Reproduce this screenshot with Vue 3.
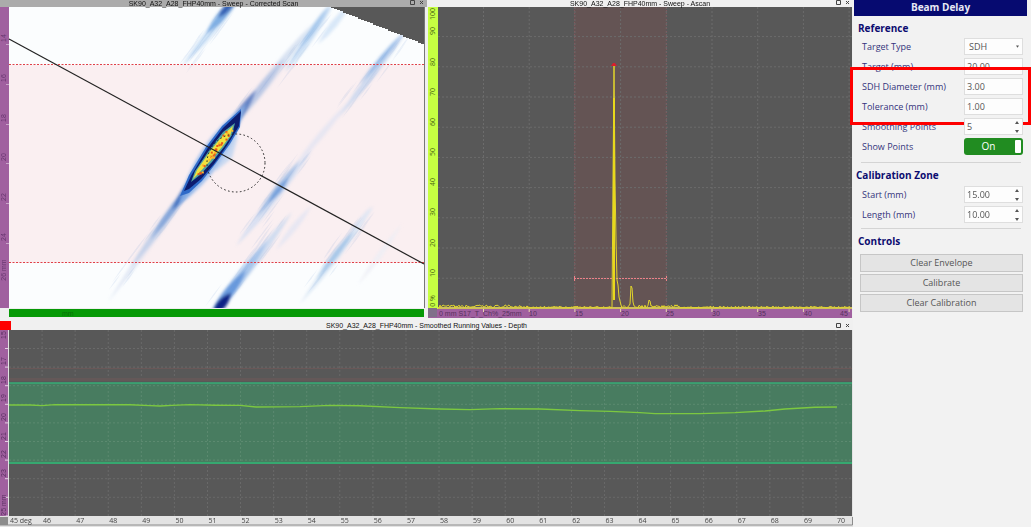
<script setup>
import { ref } from 'vue'

const targetType = ref('SDH')
const target = ref('20.00')
const diameter = ref('3.00')
const tolerance = ref('1.00')
const smoothing = ref('5')
const showPoints = ref(true)
const start = ref('15.00')
const length = ref('10.00')

const range = (n) => Array.from({ length: n }, (_, i) => i)

// Small seeded generator so that the traces look the same on every load.
function seeded(seed) {
  let s = seed
  return () => {
    s = (s * 16807) % 2147483647
    return s / 2147483647
  }
}

// Pointed streak between two points, widest in the middle.
function lens(x1, y1, x2, y2, w) {
  const dx = x2 - x1
  const dy = y2 - y1
  const l = Math.hypot(dx, dy)
  const nx = (-dy / l) * w
  const ny = (dx / l) * w
  const mx = (x1 + x2) / 2
  const my = (y1 + y2) / 2
  return `M${x1} ${y1}Q${mx + nx} ${my + ny} ${x2} ${y2}Q${mx - nx} ${my - ny} ${x1} ${y1}Z`
}

const echoes = [
  [108, 302, 205, 165, 7, '#c9d6ee', 0.5],
  [130, 268, 200, 172, 8, '#9bb8e2', 0.4],
  [150, 240, 200, 172, 7, '#5c8bd0', 0.6],
  [172, 210, 205, 165, 8, '#1c52b0', 0.7],
  [222, 140, 312, 24, 9, '#b8c9e8', 0.5],
  [228, 130, 285, 58, 8, '#8ba8da', 0.4],
  [226, 134, 256, 90, 8, '#2b57b0', 0.6],
  [285, 72, 334, 2, 8, '#b0cff0', 0.65],
  [300, 48, 330, 4, 5, '#7fb0e4', 0.5],
  [318, 44, 350, 4, 7, '#cfe2f6', 0.8],
  [182, 66, 244, -8, 8, '#c2dbf4', 0.8],
  [206, 34, 240, -6, 9, '#5c98dc', 0.7],
  [218, 18, 238, -4, 7, '#123fa0', 0.7],
  [338, 118, 410, 26, 7, '#c4d5ee', 0.8],
  [360, 84, 404, 32, 5, '#88b2e4', 0.75],
  [290, 172, 352, 98, 6, '#dfe2f2', 0.7],
  [236, 246, 312, 150, 8, '#d0dcf1', 0.8],
  [256, 218, 300, 160, 7, '#94b6e2', 0.75],
  [268, 203, 289, 178, 6, '#5c90d6', 0.6],
  [205, 325, 292, 212, 9, '#c6d7ef', 0.8],
  [205, 325, 268, 240, 10, '#96bbe8', 0.7],
  [208, 320, 246, 270, 10, '#4f88d6', 0.7],
  [212, 316, 231, 293, 9, '#0b2386', 1],
  [276, 250, 312, 205, 6, '#e2e5f3', 0.8],
  [300, 304, 374, 206, 7, '#d3e3f4', 0.8],
  [316, 280, 356, 228, 6, '#92bbe4', 0.7],
  [350, 235, 372, 206, 5, '#dde5f2', 0.8],
  [358, 285, 402, 224, 5, '#ecedf5', 0.8],
]

const rnd = seeded(77)
const speckles = []
const tracks = [
  [120, 285, 185, 195],
  [240, 115, 325, 20],
  [190, 60, 230, 10],
  [240, 245, 305, 155],
  [215, 306, 295, 205],
  [310, 290, 365, 215],
  [345, 108, 400, 40],
]
for (const [x1, y1, x2, y2] of tracks) {
  for (let i = 0; i < 16; i++) {
    const t = rnd()
    const o = (rnd() - 0.5) * 14
    const x = x1 + (x2 - x1) * t + o
    const y = y1 + (y2 - y1) * t + o * 0.6
    const l = 5 + rnd() * 7
    speckles.push(lens(x - l, y + l * 1.35, x + l, y - l * 1.35, 1.4))
  }
}

const hot = range(34).map(() => {
  const t = rnd()
  return {
    x: 197 + 32 * t + (rnd() - 0.5) * 5,
    y: 174 - 44 * t + (rnd() - 0.5) * 5,
    c: rnd() > 0.45 ? '#e8591c' : '#ffb52a',
  }
})

// Staircase edge of the scanned sector.
let sector = 'M328 7'
for (let i = 0; i < 32; i++) {
  sector += `h3v${i % 5 === 4 ? 2 : 1}`
}
sector += 'H424V7Z'

const scanLabels = [['14', 38], ['16', 78], ['18', 118], ['20', 157], ['22', 197], ['24', 237], ['26 mm', 270]]
const ampLabels = [
  ['100', 14], ['90', 31], ['80', 62], ['70', 92], ['60', 122], ['50', 152],
  ['40', 182], ['30', 212], ['20', 243], ['10', 273], ['0 %', 301],
]
const timeLabels = [['10', 533], ['15', 579], ['20', 625], ['25', 670], ['30', 716], ['35', 762], ['40', 808], ['45', 844]]
const depthLabels = [
  ['15', 335], ['17', 361], ['18', 380], ['19', 398], ['20', 417], ['21', 436], ['22', 454], ['23', 473], ['25 mm', 505],
]

const timeX = (i) => 483.5 + 45.7 * i
const ampY = (i) => 36.6 + 30.2 * i
const degX = (i) => 9 + 33.08 * i
const depthY = (i) => 348.5 + 18.6 * i

const noise = seeded(4242)
let trace = 'M438 307'
for (let x = 439; x < 851; x++) {
  if (x === 612) {
    trace += 'L612 307L613 180L614 66L615 180L616 240L617 280L618 285L619 297L621 305'
    x = 621
  } else if (x === 630) {
    trace += 'L630 304L631 286L632 288L633 302'
    x = 633
  } else if (x === 649) {
    trace += 'L649 300L650 301L651 306'
    x = 651
  } else {
    const amp = x < 530 ? 3 : x < 612 ? 1.6 : x < 680 ? 3.2 : 1.6
    trace += `L${x} ${(308 - noise() * amp).toFixed(1)}`
  }
}

const depthTrace =
  'M9 405L30 405L42 405.6L55 404.6L130 404.8L150 405.6L160 406L172 405.4L190 404.6L215 405.2L240 405.4L256 407L300 406.6L330 405.4L360 405.8L400 407.6L440 409L470 409.6L500 408.6L540 409L580 410.6L610 411.4L640 412.6L655 413.6L700 413.6L735 412.6L765 411L785 409L815 407.2L837 407'
</script>

<template>
  <div class="app">
    <main class="views">
      <div class="top">
        <section class="pane">
          <header class="bar slim active">
            <h2>SK90_A32_A28_FHP40mm - Sweep - Corrected Scan</h2>
            <span class="tools">
              <button aria-label="Maximise scan"><svg viewBox="0 0 5 5"><path d="M.5.5h4v4h-4z" /></svg></button>
              <button aria-label="Close scan"><svg viewBox="0 0 5 5"><path d="M1 1l3 3M4 1l-3 3" /></svg></button>
            </span>
          </header>
          <svg class="plot" viewBox="0 7 427 311">
            <defs>
              <filter id="soft" x="-20%" y="-20%" width="140%" height="140%"><feGaussianBlur stdDeviation="1.8" /></filter>
              <filter id="fine" x="-20%" y="-20%" width="140%" height="140%"><feGaussianBlur stdDeviation=".7" /></filter>
              <clipPath id="area"><rect x="9" y="7" width="415" height="301" /></clipPath>
            </defs>
            <rect x="0" y="7" width="427" height="311" fill="#efefef" />
            <rect x="0" y="7" width="9" height="301" fill="#a0609f" />
            <rect x="9" y="7" width="415" height="301" fill="#fbfdfe" />
            <rect x="9" y="65" width="415" height="198" fill="#faeff1" />
            <g clip-path="url(#area)">
              <g filter="url(#soft)">
                <path v-for="(e, i) in echoes" :key="i" :d="lens(e[0], e[1], e[2], e[3], e[4])" :fill="e[5]" :opacity="e[6]" />
              </g>
              <g filter="url(#fine)" fill="#7098d4" opacity=".12">
                <path v-for="(d, i) in speckles" :key="i" :d="d" />
              </g>
              <g filter="url(#soft)">
                <path :d="lens(178, 206, 246, 104, 22)" fill="#8bb4ea" opacity=".8" />
                <path d="M215 172L232 158L238 136L228 132Z" fill="#a9c9f0" opacity=".6" />
              </g>
              <g filter="url(#fine)">
                <path d="M180 196L189 175L206 147L222 126L241 109L240 127L230 144L216 163L202 181L189 193Z" fill="#2f6bc8" />
                <path d="M184 191L191 176L207 149L223 128L241 111L239 126L228 144L214 164L201 179L189 189Z" fill="#081a6e" />
                <path d="M191 182L195 171L210 149L223 132L235 123L232 135L224 147L212 162L200 175Z" fill="#54a3a0" />
                <path d="M193 179L197 170L211 150L224 134L233 126L230 136L222 147L210 161L199 173Z" fill="#f2e23c" />
              </g>
              <rect v-for="(h, i) in hot" :key="i" :x="h.x" :y="h.y" width="2" height="2" :fill="h.c" />
            </g>
            <path :d="sector" fill="#585858" />
            <g stroke="#e04048" stroke-dasharray="2 1.5">
              <path d="M9 64.5H424M9 262.5H424" />
            </g>
            <path d="M9 39L424 264" stroke="#222" stroke-width="1.2" />
            <circle cx="236" cy="163" r="29" fill="none" stroke="#222" stroke-dasharray="1.6 2.4" />
            <path d="M424.5 7V308" stroke="#777" />
            <rect x="9" y="309" width="415" height="8" fill="#069906" />
            <text class="tiny" x="62" y="316" fill="#067006">mm</text>
            <g v-for="l in scanLabels" :key="l[0]" class="tiny" fill="#683670">
              <text :transform="`translate(6 ${l[1]}) rotate(-90)`" text-anchor="middle">{{ l[0] }}</text>
              <path v-if="l[1] < 260" :d="`M6 ${l[1] + 6}.5h3`" stroke="#c9a5c9" />
            </g>
          </svg>
        </section>

        <section class="pane">
          <header class="bar slim">
            <h2>SK90_A32_A28_FHP40mm - Sweep - Ascan</h2>
            <span class="tools">
              <button aria-label="Maximise Ascan"><svg viewBox="0 0 5 5"><path d="M.5.5h4v4h-4z" /></svg></button>
              <button aria-label="Close Ascan"><svg viewBox="0 0 5 5"><path d="M1 1l3 3M4 1l-3 3" /></svg></button>
            </span>
          </header>
          <svg class="plot" viewBox="427 7 426 311">
            <rect x="427" y="7" width="426" height="311" fill="#efefef" />
            <rect x="428" y="7" width="10" height="302" fill="#c6ff42" />
            <rect x="438" y="7" width="414" height="302" fill="#585858" />
            <rect x="574" y="7" width="92" height="302" fill="#645454" />
            <g stroke="#6c6c6c" stroke-dasharray="2 2">
              <path v-for="i in range(9)" :key="'v' + i" :d="`M${timeX(i)} 7V309`" />
              <path v-for="i in range(9)" :key="'h' + i" :d="`M438 ${ampY(i)}H852`" />
            </g>
            <path d="M574.5 7V309M666.5 7V309" stroke="#80585e" stroke-dasharray="1 2" />
            <path d="M574 278.500H667M574.5 276v6M666.500 276v6" stroke="#ee8088" stroke-dasharray="2 1" />
            <rect x="428" y="309" width="424" height="9" fill="#a0609f" />
            <path d="M438 308H852" stroke="#f4e35c" stroke-width="1.500" />
            <path :d="trace" fill="none" stroke="#e3d62b" />
            <path d="M614 98V300" stroke="#e8d81c" stroke-width="2" />
            <path d="M611 66l2-3h2l2 3z" fill="#d81f2d" />
            <rect x="428" y="308" width="9" height="9" fill="#81708a" />
            <g class="tiny" fill="#56305e">
              <text x="439" y="316">0 mm S17_T_Ch%_25mm</text>
              <text v-for="l in timeLabels" :key="l[0]" :x="l[1]" y="316" text-anchor="middle">{{ l[0] }}</text>
            </g>
            <path v-for="i in range(9)" :key="i" :d="`M${timeX(i)} 309v3`" stroke="#e8d7b0" />
            <text
              v-for="l in ampLabels"
              :key="l[0]"
              class="tick"
              fill="#4f6e16"
              text-anchor="middle"
              :transform="`translate(435 ${l[1]}) rotate(-90)`"
            >{{ l[0] }}</text>
          </svg>
        </section>
      </div>

      <section class="pane">
        <header class="bar">
          <i class="flag"></i>
          <h2>SK90_A32_A28_FHP40mm - Smoothed Running Values - Depth</h2>
          <span class="tools">
            <button aria-label="Maximise depth"><svg viewBox="0 0 5 5"><path d="M.5.5h4v4h-4z" /></svg></button>
            <button aria-label="Close depth"><svg viewBox="0 0 5 5"><path d="M1 1l3 3M4 1l-3 3" /></svg></button>
          </span>
        </header>
        <svg class="plot" viewBox="0 330 853 197">
          <rect x="0" y="330" width="853" height="197" fill="#e3e3e3" />
          <rect x="0" y="330" width="8" height="186" fill="#a0609f" />
          <rect x="9" y="330" width="843" height="186" fill="#585858" />
          <g stroke="#6a6a6a" stroke-dasharray="2 2">
            <path v-for="i in range(25)" :key="'v' + i" :d="`M${degX(i + 1)} 330V516`" />
            <path v-for="i in range(9)" :key="'h' + i" :d="`M9 ${depthY(i)}H852`" />
          </g>
          <path d="M9 368.500H852" stroke="#6a5858" />
          <path d="M9 379.500H852" stroke="#645858" stroke-width="3" />
          <rect x="9" y="383" width="843" height="80" fill="#487c60" />
          <g stroke="#5c8a70" stroke-dasharray="2 2">
            <path v-for="i in range(25)" :key="'v' + i" :d="`M${degX(i + 1)} 383V463`" />
            <path v-for="i in range(5)" :key="'h' + i" :d="`M9 ${depthY(i + 2)}H852`" />
          </g>
          <path d="M9 383H852" stroke="#36ac76" stroke-width="1.400" />
          <path d="M9 463H852" stroke="#36a870" stroke-width="2" />
          <path :d="depthTrace" fill="none" stroke="#7cc840" stroke-width="1.400" />
          <path v-for="i in range(10)" :key="i" :d="`M5 ${depthY(i)}h3`" stroke="#e3cfe3" />
          <text
            v-for="l in depthLabels"
            :key="l[0]"
            class="tiny"
            fill="#5c3064"
            text-anchor="middle"
            :transform="`translate(6 ${l[1]}) rotate(-90)`"
          >{{ l[0] }}</text>
          <rect x="0" y="517" width="8" height="8" fill="#8c8c8c" />
          <path d="M0 525H852.500V517" fill="none" stroke="#8c8c8c" />
          <g class="tick" fill="#444">
            <text x="10" y="523">45 deg</text>
            <text v-for="i in range(25)" :key="i" :x="degX(i + 1) + 5" y="523" text-anchor="middle">{{ 46 + i }}</text>
          </g>
        </svg>
      </section>
    </main>

    <aside class="panel">
      <h1>Beam Delay</h1>
      <form @submit.prevent>
        <h3>Reference</h3>
        <div class="row">
          <label for="type">Target Type</label>
          <div class="field">
            <select id="type" v-model="targetType"><option>SDH</option></select>
            <svg class="caret" viewBox="0 0 4 3"><path d="M0 0h4L2 3z" /></svg>
          </div>
        </div>
        <div class="row">
          <label for="target">Target (mm)</label>
          <div class="field"><input id="target" v-model="target" /></div>
        </div>
        <div class="marked">
          <div class="row">
            <label for="diameter">SDH Diameter (mm)</label>
            <div class="field"><input id="diameter" v-model="diameter" /></div>
          </div>
          <div class="row">
            <label for="tolerance">Tolerance (mm)</label>
            <div class="field"><input id="tolerance" v-model="tolerance" /></div>
          </div>
        </div>
        <div class="row">
          <label for="smoothing">Smoothing Points</label>
          <div class="field">
            <input id="smoothing" v-model="smoothing" />
            <svg class="spin" viewBox="0 0 4 12"><path d="M2 0l2 3H0zM0 9h4l-2 3z" /></svg>
          </div>
        </div>
        <div class="row last">
          <label for="points">Show Points</label>
          <label class="switch"><input id="points" v-model="showPoints" type="checkbox" /><span>{{ showPoints ? 'On' : 'Off' }}</span></label>
        </div>
        <hr />
        <h3 class="zone">Calibration Zone</h3>
        <div class="row">
          <label for="start">Start (mm)</label>
          <div class="field">
            <input id="start" v-model="start" />
            <svg class="spin" viewBox="0 0 4 12"><path d="M2 0l2 3H0zM0 9h4l-2 3z" /></svg>
          </div>
        </div>
        <div class="row">
          <label for="length">Length (mm)</label>
          <div class="field">
            <input id="length" v-model="length" />
            <svg class="spin" viewBox="0 0 4 12"><path d="M2 0l2 3H0zM0 9h4l-2 3z" /></svg>
          </div>
        </div>
        <hr class="second" />
        <h3>Controls</h3>
        <div class="actions">
          <button>Clear Envelope</button>
          <button>Calibrate</button>
          <button>Clear Calibration</button>
        </div>
      </form>
    </aside>
  </div>
</template>

<style>
body {
  background: #f2f2f2;
}
</style>

<style scoped>
.app {
  display: grid;
  grid-template-columns: minmax(0, 1fr) 178px;
  min-height: 100vh;
  background: #f2f2f2;
  font-family: "Open Sans", "Noto Sans", sans-serif;
}
.top {
  display: grid;
  grid-template-columns: minmax(0, 427fr) minmax(0, 426fr);
}
.plot {
  display: block;
  width: 100%;
  height: auto;
}
.bar {
  display: flex;
  align-items: flex-end;
  height: 12px;
  position: relative;
  background: #f0f0f0;
}
.bar h2 {
  flex: 1;
  margin: 0;
  text-align: center;
  font: 7px/9px "Liberation Sans", Arial, sans-serif;
  color: #111;
}
.slim {
  height: 7px;
  align-items: flex-start;
}
.slim h2 {
  line-height: 7px;
}
.active {
  background: #ababab;
}
.tools {
  position: absolute;
  right: 3px;
  bottom: 2px;
  display: flex;
  gap: 4px;
}
.tools button {
  width: 5px;
  height: 5px;
  padding: 0;
  border: 0;
  background: none;
}
.tools svg {
  display: block;
  fill: none;
  stroke: #444;
}
.flag {
  position: absolute;
  left: 0;
  bottom: 0;
  width: 11px;
  height: 9px;
  background: #fe0000;
}
.tiny {
  font: 7px "Liberation Sans", Arial, sans-serif;
}
.tick {
  font: 7px "Open Sans", "Noto Sans", sans-serif;
}
.panel {
  padding: 0 4px 0 1px;
}
.panel h1 {
  margin: 0;
  height: 16px;
  background: #060a70;
  color: #e8e8f4;
  text-align: center;
  font-size: 10px;
  line-height: 15px;
  font-weight: 700;
}
form {
  padding: 4px 4px 0 6px;
}
h3 {
  margin: 0 -2px;
  color: #0c0c70;
  font-size: 10px;
  font-weight: 700;
  line-height: 16px;
}
.zone {
  margin-left: -4px;
  margin-bottom: 1px;
}
.row {
  display: flex;
  align-items: center;
  justify-content: space-between;
  height: 20px;
  padding-left: 2px;
  font-size: 9px;
  color: #34347c;
}
.field {
  position: relative;
  width: 59px;
  height: 17px;
  box-sizing: border-box;
  border: 1px solid #dedede;
  background: #fdfdfd;
}
.field input,
.field select {
  display: block;
  box-sizing: border-box;
  width: 100%;
  height: 15px;
  margin: 0;
  padding: 0 2px;
  border: 0;
  background: none;
  appearance: none;
  color: #555;
  font: 9px/15px "Open Sans", "Noto Sans", sans-serif;
}
.field select {
  padding-left: 4px;
}
.caret,
.spin {
  position: absolute;
  right: 3px;
  fill: #555;
}
.caret {
  top: 6px;
  width: 3px;
  height: 3px;
}
.spin {
  top: 2px;
  width: 4px;
  height: 12px;
}
.marked {
  position: relative;
}
.marked::after {
  content: "";
  position: absolute;
  inset: -9px -8px -9px -10px;
  border: 3px solid #fe0000;
  pointer-events: none;
}
.switch {
  position: relative;
  display: flex;
  align-items: center;
  justify-content: center;
  width: 59px;
  height: 17px;
  box-sizing: border-box;
  padding-right: 10px;
  border-radius: 3px;
  background: #218c21;
  color: #fff;
  font-size: 10px;
}
.switch input {
  position: absolute;
  inset: 0;
  margin: 0;
  opacity: 0;
}
.switch::after {
  content: "";
  position: absolute;
  right: 2px;
  top: 2px;
  width: 6px;
  height: 13px;
  border-radius: 1px;
  background: #fff;
}
hr {
  margin: 6px 2px 4px 1px;
  border: 0;
  border-top: 1px solid #d4d4d4;
}
.second {
  margin-top: 4px;
}
.actions {
  display: grid;
  gap: 2px;
  margin: 5px 0 0;
}
.actions button {
  height: 18px;
  padding: 0;
  border: 1px solid #c6c6c6;
  background: #e4e4e4;
  color: #555;
  font: 9px/14px "Open Sans", "Noto Sans", sans-serif;
}
</style>
